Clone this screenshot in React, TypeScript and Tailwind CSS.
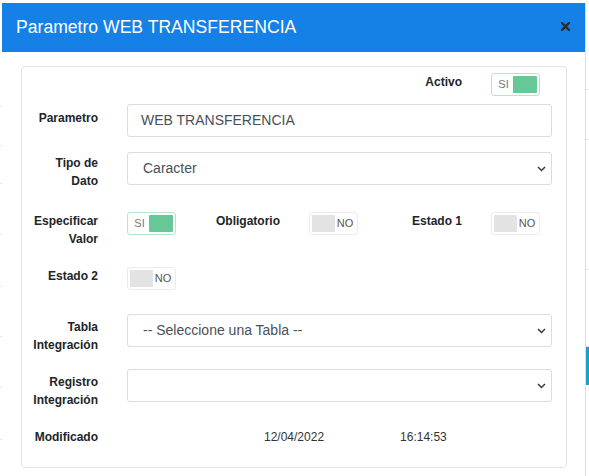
import React from "react";

function Toggle({ on }: { on: boolean }) {
  if (on) {
    return (
      <div className="flex h-[23px] w-[49px] rounded-[3px] border border-[#b5e6cc] bg-white p-[2px]">
        <span className="flex flex-1 items-center justify-center text-[11px] text-[#777]">SI</span>
        <span className="w-[24px] rounded-[1px] bg-[#66c896]" />
      </div>
    );
  }
  return (
    <div className="flex h-[23px] w-[49px] rounded-[3px] border border-[#ececec] bg-white p-[2px]">
      <span className="w-[23px] rounded-[1px] bg-[#e3e3e3]" />
      <span className="flex flex-1 items-center justify-center text-[11px] text-[#555]">NO</span>
    </div>
  );
}

function Chevron() {
  return (
    <svg width="9" height="6" viewBox="0 0 9 6" className="shrink-0">
      <polyline points="1,1 4.5,4.5 8,1" fill="none" stroke="#343a40" strokeWidth="1.5" />
    </svg>
  );
}

function SelectBox({ value }: { value: string }) {
  return (
    <div className="flex h-[33px] items-center justify-between rounded-[3px] border border-[#dcdcdc] pl-[15px] pr-[5px] text-[14px] text-[#495057]">
      <span>{value}</span>
      <Chevron />
    </div>
  );
}

function Label({ children, className = "" }: { children: React.ReactNode; className?: string }) {
  return (
    <div className={`text-right text-[12px] font-bold leading-[18px] text-[#212529] ${className}`}>{children}</div>
  );
}

// same columns for every row of the form
const row = "grid grid-cols-[65px_59px_65px_59px_65px_61px] gap-x-[29px] items-start";

const leftLines = [104, 39, 38, 51, 52, 50, 51, 52];

export default function App() {
  return (
    <div className="flex h-[476px] w-[589px] flex-col overflow-hidden bg-white font-['Liberation_Sans',Arial,sans-serif]">
      <div className="h-[3px] shrink-0" />
      <div className="flex flex-1">
        {/* page behind, left */}
        <div className="flex w-[2px] flex-col">
          {leftLines.map((h, i) => (
            <div key={i} style={{ height: h }} className="border-b border-[#e6e6e6]" />
          ))}
        </div>

        {/* modal */}
        <div className="flex w-[584px] flex-col border-r border-[#dedede] bg-white">
          <div className="flex h-[49px] items-center justify-between bg-[#1580e6] pl-[14px] pr-[15px]">
            <h1 className="text-[17.6px] text-white">Parametro WEB TRANSFERENCIA</h1>
            <svg width="9" height="9" viewBox="0 0 9 9" className="mb-[2px]">
              <path d="M1 1 L8 8 M8 1 L1 8" stroke="#2a2a2a" strokeWidth="2.4" strokeLinecap="square" />
            </svg>
          </div>

          <div className="pl-[19px] pr-[18px] pt-[14px]">
            <div className="flex h-[402px] flex-col rounded-[4px] border border-[#e3e3e3] pl-[11px] pr-[14px] pt-[6px]">
              {/* Activo */}
              <div className={`${row} h-[23px]`}>
                <Label className="col-start-5 pt-[0px]">Activo</Label>
                <div className="col-start-6">
                  <Toggle on />
                </div>
              </div>

              {/* Parametro */}
              <div className={`${row} mt-[8px] h-[33px]`}>
                <Label className="pt-[5px]">Parametro</Label>
                <div className="col-span-5">
                  <div className="flex h-[33px] items-center rounded-[3px] border border-[#dcdcdc] pl-[13px] text-[14px] text-[#495057]">
                    WEB TRANSFERENCIA
                  </div>
                </div>
              </div>

              {/* Tipo de Dato */}
              <div className={`${row} mt-[15px] h-[33px]`}>
                <Label className="pt-[2px]">
                  Tipo de
                  <br />
                  Dato
                </Label>
                <div className="col-span-5">
                  <SelectBox value="Caracter" />
                </div>
              </div>

              {/* toggles */}
              <div className={`${row} mt-[27px] h-[23px]`}>
                <Label>
                  Especificar
                  <br />
                  Valor
                </Label>
                <Toggle on />
                <Label>Obligatorio</Label>
                <Toggle on={false} />
                <Label>Estado 1</Label>
                <Toggle on={false} />
              </div>

              {/* Estado 2 */}
              <div className={`${row} mt-[32px] h-[23px]`}>
                <Label>Estado 2</Label>
                <Toggle on={false} />
              </div>

              {/* Tabla Integracion */}
              <div className={`${row} mt-[24px] h-[33px]`}>
                <Label className="pt-[4px]">
                  Tabla
                  <br />
                  Integración
                </Label>
                <div className="col-span-5">
                  <SelectBox value="-- Seleccione una Tabla --" />
                </div>
              </div>

              {/* Registro Integracion */}
              <div className={`${row} mt-[22px] h-[33px]`}>
                <Label className="pt-[4px]">
                  Registro
                  <br />
                  Integración
                </Label>
                <div className="col-span-5">
                  <SelectBox value="" />
                </div>
              </div>

              {/* Modificado */}
              <div className="mt-[26px] flex text-[12px] leading-[18px]">
                <div className="w-[65px] text-right font-bold text-[#212529]">Modificado</div>
                <div className="ml-[166px] text-[#333]">12/04/2022</div>
                <div className="ml-[76px] text-[#333]">16:14:53</div>
              </div>
            </div>
          </div>
        </div>

        {/* page behind, right */}
        <div className="flex flex-1 flex-col">
          <div className="h-[87px] border-b border-[#e6e6e6]" />
          <div className="h-[50px] border-b border-[#e6e6e6]" />
          <div className="h-[130px] border-b border-[#e6e6e6]" />
          <div className="h-[77px] border-b border-[#e6e6e6]" />
          <div className="h-[38px] bg-[#17a2c8]" />
        </div>
      </div>
    </div>
  );
}
